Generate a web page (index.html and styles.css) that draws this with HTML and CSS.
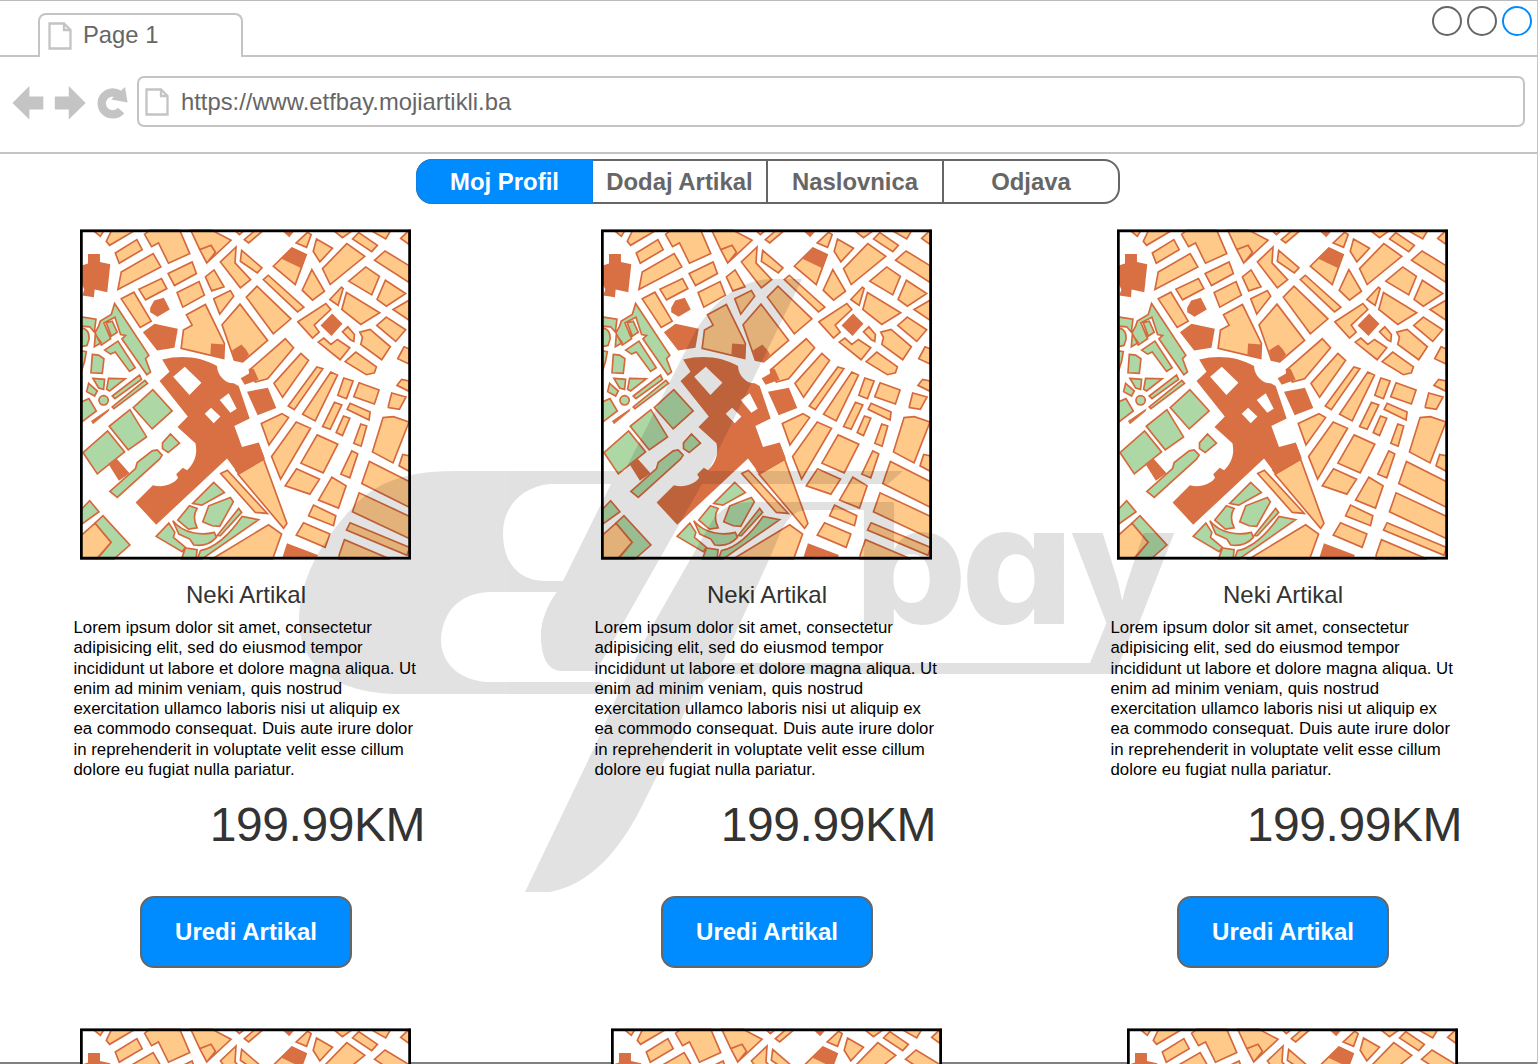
FILE: index.html
```
<!DOCTYPE html>
<html lang="bs">
<head>
<meta charset="utf-8">
<title>Page 1</title>
<link rel="stylesheet" href="styles.css">
</head>
<body>
<svg class="defs" aria-hidden="true">
  <symbol id="file" viewBox="0 0 24 28">
    <path d="M1.5 1.5H16L22.5 8V26.5H1.5ZM16 1.5V8H22.5" fill="#fff" stroke="#c4c4c4" stroke-width="2.300"/>
  </symbol>
  <symbol id="map" viewBox="33 9 995 993">
    <rect x="33" y="9" width="995" height="993" fill="#fff"/>
    <g fill="#ffc98a" stroke="#d5693c" stroke-width="5">
      <path d="M75 14L94 30L104 14ZM112 45L127 14H195L122 57ZM139 80L204 40L220 70L151 111ZM157 137L253 82L276 122L147 190ZM227 24L242 12H333L363 82L299 111L269 50L248 61ZM366 12H430L487 42L414 110L393 70ZM393 70L427 57L440 78L414 110ZM298 142L370 107L383 142L317 178ZM210 189L278 157L294 187L230 221ZM325 199L391 166L407 207L342 243ZM410 152L436 131L466 182L429 194ZM435 218L485 193L495 210L453 264ZM157 218L195 198L247 285L214 304ZM353 266L410 235L467 352L465 397L337 367L344 312L370 297ZM460 296L514 234L597 343L522 407L497 402ZM455 107L502 62L499 110L546 160L515 185ZM519 72L580 125L566 140L515 105ZM527 40L557 14H582L540 50ZM500 14L512 25L525 14Z"/>
      <path transform="translate(522 0)" d="M161 50L195 18L206 25L192 63ZM222 38L270 66L232 107L212 75ZM275 14L300 34L328 14ZM330 38L349 19L405 57L388 76ZM388 14L430 38L444 14ZM475 36L500 12V54ZM396 102L428 74L500 118V169ZM240 127L313 52L367 90L263 175ZM92 120L148 65L191 85L158 175ZM208 130L246 195L210 222L179 192ZM62 160L77 147L184 243L165 257ZM11 213L43 180L145 278L92 323ZM319 165L370 122L411 150L388 206ZM429 162L490 202L432 240L404 220ZM262 220L297 183L302 187L287 238ZM312 199L412 260L355 295L298 250ZM452 250L500 222V282ZM432 273L490 311L460 346L403 298ZM166 287L250 232L265 250L215 297L230 318L210 336ZM300 317L316 302L336 325L334 346L324 341ZM227 348L244 336L265 355L285 340L322 365L293 401ZM352 318L383 310L444 362L418 401L355 355L360 334ZM308 407L340 378L402 422L396 440L372 446ZM466 398L485 362L500 368V414ZM20 432L128 338L153 365L75 458L38 468ZM94 472L175 382L198 403L120 514Z"/>
      <path d="M659 540L745 423L763 428L677 551ZM702 565L787 438L807 447L740 585ZM808 508L826 456L854 465L834 518ZM856 512L872 470L932 492L918 534ZM986 478L1000 460L1022 465V496ZM960 540L970 501L1013 513L993 550L960 545ZM762 602L798 529L820 537L785 610ZM836 550L845 532L905 558L902 582ZM803 620L825 570L844 577L822 629ZM856 652L877 594L895 600L878 661ZM578 593L640 563L660 575L601 657ZM609 692L683 588L726 607L636 760ZM697 712L746 627L808 655L764 741ZM817 745L850 675L868 684L844 756ZM912 678L944 575L975 572L1022 588L974 711ZM992 720L1003 686L1024 690V737ZM880 773L903 707L1024 768V845ZM650 780L684 729L753 760L724 805ZM750 823L790 754L833 780L810 847ZM852 858L872 801L1024 872V939ZM720 870L735 838L802 870L795 900ZM683 928L705 891L784 925L770 965ZM834 913L845 891L1024 965L1016 989ZM812 988L828 942L965 1000H812ZM456 743L476 733L596 863L560 860ZM508 745L585 700L655 893L645 908ZM430 1000L600 897L639 925L612 1000ZM36 930L78 892L127 950L82 1000H36Z"/>
      <path fill="#d87044" stroke="none" d="M639 12L662 33L680 12ZM637 97L670 65L713 85L697 125ZM756 298L791 262L822 293L789 330ZM516 457L541 442V428L555 428L570 461L528 476ZM427 352L467 355L465 397L425 386ZM490 373L518 355L532 370L541 385L522 408L497 401ZM508 745L498 732L570 650L588 697Z"/>
    </g>
    <g fill="#add7a4" stroke="#d5693c" stroke-width="5">
      <path d="M89 300L94 285L127 265L137 232L240 388L230 398L245 438L234 446L159 338L170 328L155 325L138 273L105 290L125 338L97 357L78 320ZM112 290L130 285L145 318L127 330ZM107 372L147 345L199 425L182 436L139 378L125 384ZM36 272L81 279L76 318L62 302L36 300ZM36 306C55 306 62 322 60 340L54 358L36 362ZM79 325L97 350L76 362ZM70 385L89 387L105 398L100 442L66 440ZM36 374L52 377L47 405L36 440ZM72 457L107 460L104 490L89 486ZM119 457L169 458L122 495L113 490ZM59 472L85 495L77 510L53 497ZM130 510L212 447L218 460L138 518ZM130 543L228 463L236 472L135 548ZM36 528L60 518L82 555L36 590ZM193 545L252 491L310 555L250 609ZM121 601L183 551L233 633L178 672ZM42 680L116 615L167 678L85 744ZM123 797L200 728L205 710L250 675L265 672L280 688L272 700L145 815ZM281 651L305 624L332 652L298 680L281 668ZM36 852L62 825L90 858L36 897ZM78 892L102 870L183 958L135 1000H85L127 950Z"/>
      <circle cx="104" cy="523" r="14"/>
      <path d="M372 833L435 770L467 800L399 838ZM327 883L362 840L385 848Q369 873 385 906L359 910ZM402 888L420 840L485 815L494 828L453 902L430 900ZM445 930L510 848L519 860L455 930ZM312 885C345 925 400 930 437 920L443 935C425 955 400 962 375 958L363 940L330 925ZM262 932L300 892L318 920L314 935L350 965L340 978ZM338 1000L350 967L385 972L382 1000ZM386 1000L395 975C440 965 480 930 520 872L570 882L400 1000Z"/>
    </g>
    <g fill="#d87044">
      <path d="M38 118L57 112V83H93V107L124 114L115 198L77 190L75 213L40 208L46 190L38 172ZM244 245L256 223L285 215L303 250L266 272L244 258ZM222 318L257 293L327 308L317 365L265 373ZM535 497L598 485L623 546L567 568ZM66 585L122 547L119 556L72 595ZM118 714L142 697L182 742L150 765Z"/>
      <path d="M640 1000L655 953L748 988L744 1000Z"/>
      <path fill-rule="evenodd" d="M280 400C340 385 400 393 445 420C445 448 470 473 495 472L510 480L543 578L497 600L520 663L570 650L588 697L510 745L475 698L262 897L200 830L252 778C280 787 315 776 328 756L322 745L342 726L355 733C374 715 388 688 380 652L326 603L357 572L272 465L302 437ZM313 452L348 422L398 470L362 507ZM453 522L480 502L504 548L485 560ZM408 563L427 545L455 572L435 592Z"/>
    </g>
    <rect x="37" y="13.500" width="987" height="984" fill="none" stroke="#000" stroke-width="8.500"/>
  </symbol>
</svg>
<div class="window">
  <header class="tabs">
    <div class="tab"><svg class="file"><use href="#file"/></svg><span>Page 1</span></div>
    <div class="controls"><i></i><i></i><i class="active"></i></div>
  </header>
  <div class="toolbar">
    <svg class="tools" viewBox="0 0 137 50" fill="#c4c4c4">
      <path d="M12.500 27L29.500 10V20.500H43.500V33.500H29.500V43.500ZM86 27L69 10V20.500H55V33.500H69V43.500Z"/>
      <path d="M121.500 34.500A11 11 0 1 1 119.500 18.500" fill="none" stroke="#c4c4c4" stroke-width="8.500"/>
      <path d="M125.500 11L128 26.500L111.500 23.500Z"/>
    </svg>
    <div class="address"><svg class="file"><use href="#file"/></svg><span>https://www.etfbay.mojiartikli.ba</span></div>
  </div>
  <nav class="menu">
    <a class="current">Moj Profil</a><a>Dodaj Artikal</a><a>Naslovnica</a><a>Odjava</a>
  </nav>
  <main>
    <section class="items">
      <article class="card">
        <svg class="map"><use href="#map"/></svg>
        <h2>Neki Artikal</h2>
        <p>Lorem ipsum dolor sit amet, consectetur<br>adipisicing elit, sed do eiusmod tempor<br>incididunt ut labore et dolore magna aliqua. Ut<br>enim ad minim veniam, quis nostrud<br>exercitation ullamco laboris nisi ut aliquip ex<br>ea commodo consequat. Duis aute irure dolor<br>in reprehenderit in voluptate velit esse cillum<br>dolore eu fugiat nulla pariatur.</p>
        <div class="price">199.99KM</div>
        <button>Uredi Artikal</button>
      </article>
      <article class="card">
        <svg class="map"><use href="#map"/></svg>
        <h2>Neki Artikal</h2>
        <p>Lorem ipsum dolor sit amet, consectetur<br>adipisicing elit, sed do eiusmod tempor<br>incididunt ut labore et dolore magna aliqua. Ut<br>enim ad minim veniam, quis nostrud<br>exercitation ullamco laboris nisi ut aliquip ex<br>ea commodo consequat. Duis aute irure dolor<br>in reprehenderit in voluptate velit esse cillum<br>dolore eu fugiat nulla pariatur.</p>
        <div class="price inset">199.99KM</div>
        <button>Uredi Artikal</button>
      </article>
      <article class="card">
        <svg class="map"><use href="#map"/></svg>
        <h2>Neki Artikal</h2>
        <p>Lorem ipsum dolor sit amet, consectetur<br>adipisicing elit, sed do eiusmod tempor<br>incididunt ut labore et dolore magna aliqua. Ut<br>enim ad minim veniam, quis nostrud<br>exercitation ullamco laboris nisi ut aliquip ex<br>ea commodo consequat. Duis aute irure dolor<br>in reprehenderit in voluptate velit esse cillum<br>dolore eu fugiat nulla pariatur.</p>
        <div class="price">199.99KM</div>
        <button>Uredi Artikal</button>
      </article>
    </section>
    <section class="items next">
      <svg class="map"><use href="#map"/></svg>
      <svg class="map"><use href="#map"/></svg>
      <svg class="map"><use href="#map"/></svg>
    </section>
  </main>
  <svg class="watermark" viewBox="290 270 890 630">
    <defs><clipPath id="above"><rect x="850" y="480" width="340" height="147"/></clipPath></defs>
    <g opacity=".114">
      <path fill-rule="evenodd" d="M903 471H460C400 470 372 486 352 508C320 543 299 580 299 622C300 672 345 694 400 694H620L600 682H487C458 680 441 662 441 640C442 612 460 592 492 592H557C548 604 541 620 541 637C542 660 549 671 563 671H596L702 484H888ZM611 484H550C520 487 503 508 503 533C503 562 518 581 545 581H563Z"/>
      <path d="M802 279H772C735 279 705 310 690 342L618 484L557 592C548 604 541 620 541 637C542 660 549 671 563 671H596Q655 565 702 484Z"/>
      <path d="M893 502H755C730 502 720 508 709 526L690 560L650 630L618 694L596 744L525 892H550C590 885 620 850 642 806L663 764C680 725 695 674 720 674H1115L1138 617H1109L1090 663H722L772 553C782 530 787 510 808 510H867V530H893Z"/>
      <g clip-path="url(#above)" class="brand"><text x="854" y="623.500" textLength="113" lengthAdjust="spacingAndGlyphs">b</text><text x="961" y="623.500" textLength="113" lengthAdjust="spacingAndGlyphs">a</text><text x="1070" y="623.500" textLength="106" lengthAdjust="spacingAndGlyphs">y</text></g>
    </g>
  </svg>
</div>
</body>
</html>
```
FILE: styles.css
```
* { box-sizing: border-box; }
body {
  margin: 0;
  background: #fff;
  font-family: "Liberation Sans", Arial, sans-serif;
  color: #666;
}
.defs { position: absolute; width: 0; height: 0; }
.window {
  position: relative;
  height: 1064px;
  overflow: hidden;
  border-top: 1px solid #bbb;
  border-right: 1px solid #c4c4c4;
  background: linear-gradient(#808080, #808080) 0 100% / 100% 2px no-repeat #fff;
}
.tabs {
  display: flex;
  justify-content: space-between;
  align-items: flex-start;
  height: 56px;
  padding: 5px 5px 0 38px;
  border-bottom: 2px solid #c4c4c4;
}
.tab {
  display: flex;
  align-items: center;
  gap: 11px;
  width: 205px;
  height: 44px;
  margin-top: 7px;
  padding: 0 8px;
  border: 2px solid #c4c4c4;
  border-bottom: 0;
  border-radius: 8px 8px 0 0;
  background: #fff;
  font-size: 23.800px;
}
.tab span { margin-top: -3px; }
.file { width: 24px; height: 28px; flex: none; }
.controls { display: flex; gap: 5px; }
.controls i {
  width: 30px;
  height: 30px;
  border: 2px solid #666;
  border-radius: 50%;
}
.controls .active { border-color: #008cff; }
.toolbar {
  display: flex;
  height: 97px;
  padding: 19px 12px 0 0;
  border-bottom: 2px solid #c4c4c4;
}
.tools { width: 136.5px; height: 50px; flex: none; }
.address {
  flex: 1;
  display: flex;
  align-items: center;
  gap: 12px;
  height: 51px;
  padding: 1px 6.500px 0;
  border: 2px solid #c4c4c4;
  border-radius: 7px;
  font-size: 23.800px;
}
.menu {
  display: grid;
  grid-template-columns: 175px 175px 176px 1fr;
  width: 704px;
  height: 45px;
  margin: 5px 0 0 416px;
  border: 2px solid #666;
  border-radius: 16px;
  font-size: 23.900px;
  font-weight: bold;
}
.menu a {
  display: flex;
  align-items: center;
  justify-content: center;
  border-right: 2px solid #666;
}
.menu a:last-child { border-right: 0; }
.menu .current {
  margin: -2px 0 -2px -2px;
  border: 1px solid #0a84ec;
  border-radius: 16px 0 0 16px;
  background: #008cff;
  color: #fff;
}
.items {
  display: flex;
  height: 824px;
  padding: 25px 0 0 80px;
  gap: 190px;
}
.card {
  display: flex;
  flex-direction: column;
  align-items: center;
  width: 331px;
}
.card:last-child { margin-left: -5px; }
.map { display: block; width: 331px; height: 331px; flex: none; }
.card h2 {
  margin: 21px 0 0 1px;
  font-size: 24px;
  line-height: 28px;
  font-weight: normal;
  color: #333;
}
.card p {
  width: 346px;
  margin: 9px 0 0 2px;
  font-size: 16.800px;
  line-height: 20.250px;
  color: #000;
  white-space: nowrap;
}
.price {
  align-self: flex-end;
  margin: 17px -14px 0 0;
  font-size: 48px;
  line-height: 56px;
  letter-spacing: -.450px;
  color: #333;
}
.price.inset { margin-right: -4px; }
.card button {
  width: 212px;
  height: 72px;
  margin: 43px 0 0 1px;
  border: 2px solid #666;
  border-radius: 14px;
  background: #008cff;
  font: bold 24px "Liberation Sans", Arial, sans-serif;
  color: #fff;
}
.next { padding-top: 0; }
.next .map:nth-child(2) { margin-left: 10px; }
.next .map:nth-child(3) { margin-left: -5px; }
.watermark {
  position: absolute;
  left: 290px;
  top: 269px;
  width: 890px;
  height: 630px;
  pointer-events: none;
}
.brand {
  font-family: Inter, sans-serif;
  font-size: 166px;
  font-weight: 800;
  font-feature-settings: "cv11";
}
```
